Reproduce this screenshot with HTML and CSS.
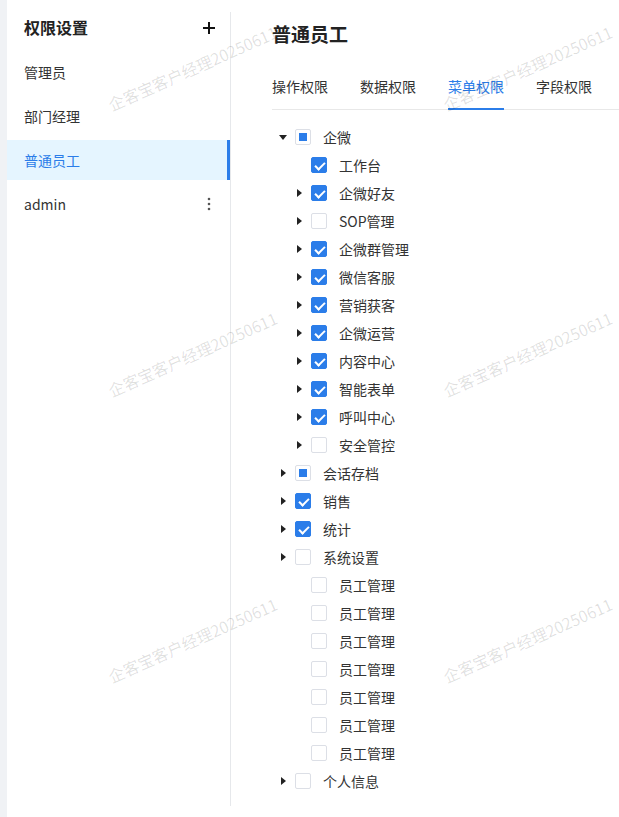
FILE: index.html
```html
<!doctype html>
<html>
<head>
<meta charset="utf-8">
<title>权限设置</title>
<link rel="stylesheet" href="styles.css">
</head>

<body>

<div class="page">
    <aside class="side">
        <div class="side-head">
            <span>权限设置</span>
            <svg class="add" width="14" height="14" viewBox="0 0 14 14"><path d="M7 1v12M1 7h12" stroke="#111" stroke-width="2"/></svg>
        </div>
        <ul class="role-list">
            <li>管理员</li>
            <li>部门经理</li>
            <li class="ac">普通员工</li>
            <li>admin
                <svg class="more" width="4" height="14" viewBox="0 0 4 14"><circle cx="2" cy="2" r="1.3" fill="#555"/><circle cx="2" cy="7" r="1.3" fill="#555"/><circle cx="2" cy="12" r="1.3" fill="#555"/></svg>
            </li>
        </ul>
    </aside>

    <main class="main">
        <h2 class="title">普通员工</h2>
        <div class="tabs">
            <a href="javascript:;">操作权限</a>
            <a href="javascript:;">数据权限</a>
            <a href="javascript:;" class="ac">菜单权限</a>
            <a href="javascript:;">字段权限</a>
        </div>

        <ul class="tree">
            <li><i class="caret down"></i><span class="cb half"></span>企微</li>
            <li class="sub"><i class="caret none"></i><span class="cb on"></span>工作台</li>
            <li class="sub"><i class="caret"></i><span class="cb on"></span>企微好友</li>
            <li class="sub"><i class="caret"></i><span class="cb"></span>SOP管理</li>
            <li class="sub"><i class="caret"></i><span class="cb on"></span>企微群管理</li>
            <li class="sub"><i class="caret"></i><span class="cb on"></span>微信客服</li>
            <li class="sub"><i class="caret"></i><span class="cb on"></span>营销获客</li>
            <li class="sub"><i class="caret"></i><span class="cb on"></span>企微运营</li>
            <li class="sub"><i class="caret"></i><span class="cb on"></span>内容中心</li>
            <li class="sub"><i class="caret"></i><span class="cb on"></span>智能表单</li>
            <li class="sub"><i class="caret"></i><span class="cb on"></span>呼叫中心</li>
            <li class="sub"><i class="caret"></i><span class="cb"></span>安全管控</li>
            <li><i class="caret"></i><span class="cb half"></span>会话存档</li>
            <li><i class="caret"></i><span class="cb on"></span>销售</li>
            <li><i class="caret"></i><span class="cb on"></span>统计</li>
            <li><i class="caret"></i><span class="cb"></span>系统设置</li>
            <li class="sub"><i class="caret none"></i><span class="cb"></span>员工管理</li>
            <li class="sub"><i class="caret none"></i><span class="cb"></span>员工管理</li>
            <li class="sub"><i class="caret none"></i><span class="cb"></span>员工管理</li>
            <li class="sub"><i class="caret none"></i><span class="cb"></span>员工管理</li>
            <li class="sub"><i class="caret none"></i><span class="cb"></span>员工管理</li>
            <li class="sub"><i class="caret none"></i><span class="cb"></span>员工管理</li>
            <li class="sub"><i class="caret none"></i><span class="cb"></span>员工管理</li>
            <li><i class="caret"></i><span class="cb"></span>个人信息</li>
        </ul>
    </main>

    <!-- 水印 -->
    <div class="watermark">
        <span>企客宝客户经理20250611</span>
        <span>企客宝客户经理20250611</span>
        <span>企客宝客户经理20250611</span>
        <span>企客宝客户经理20250611</span>
        <span>企客宝客户经理20250611</span>
        <span>企客宝客户经理20250611</span>
    </div>
</div>

</body>
</html>
```

FILE: styles.css
```css
*{ padding: 0; margin: 0; box-sizing: border-box; }
a{ text-decoration: none; }
li{ list-style: none; }
html, body{ height: 100%; overflow: hidden; }
body{ background: #f0f2f5; font-family: "Noto Sans CJK SC", "Noto Sans", sans-serif; color: #333; font-size: 14px; }

.page { position: relative; margin-left: 7px; height: 817px; background: #fff; display: flex; overflow: hidden; }

/* 左侧角色列表 */
.side { width: 224px; flex: none; margin: 12px 0 11px; border-right: 1px solid #e6e8eb; }
.side-head { height: 36px; display: flex; align-items: center; justify-content: space-between; padding: 0 14px 0 17px; font-size: 16px; font-weight: 600; color: #222; }
.side-head span { position: relative; top: -3px; }
.side-head .add { position: relative; top: -2px; }
.role-list { padding-top: 4px; display: flex; flex-direction: column; gap: 4px; }
.role-list li { height: 40px; display: flex; align-items: center; justify-content: space-between; padding: 0 19px 0 17px; color: #333; cursor: pointer; }
.role-list .ac { background: #e5f5ff; color: #2b7de9; border-right: 3px solid #2b7de9; padding-right: 16px; }

/* 右侧 */
.main { flex: 1; padding: 18px 0 0 41px; min-width: 0; }
.title { font-size: 19px; font-weight: 600; line-height: 32px; color: #222; }
.tabs { margin-top: 25px; display: flex; gap: 32px; border-bottom: 1px solid #e8e8e8; }
.tabs a { display: block; line-height: 22px; padding-bottom: 11px; color: #333; font-size: 14px; border-bottom: 2px solid transparent; margin-bottom: -1px; }
.tabs .ac { color: #2b7de9; border-bottom-color: #2b7de9; }

.tree { margin-top: 13px; }
.tree li { height: 28px; display: flex; align-items: center; color: #333; }
.tree .sub { padding-left: 16px; }

.caret { width: 23px; height: 28px; flex: none; position: relative; }
.caret::after { content: ''; position: absolute; left: 9px; top: 10px; border-style: solid; border-width: 4px 0 4px 5px; border-color: transparent transparent transparent #222; }
.caret.down::after { left: 7px; top: 12px; border-width: 5px 4px 0 4px; border-color: #222 transparent transparent transparent; }
.caret.none::after { display: none; }

.cb { width: 16px; height: 16px; flex: none; margin-right: 12px; border: 1px solid #dcdfe6; border-radius: 2px; background: #fff; position: relative; }
.cb.on { background: #2b7de9; border-color: #2b7de9; }
.cb.on::after { content: ''; position: absolute; left: 5px; top: 2px; width: 4px; height: 8px; border: solid #fff; border-width: 0 2px 2px 0; transform: rotate(45deg); }
.cb.half::after { content: ''; position: absolute; left: 3px; top: 3px; width: 8px; height: 8px; background: #2b7de9; }

.watermark { position: absolute; top: -75px; left: 18px; display: grid; grid-template-columns: repeat(2, 335px); grid-auto-rows: 286px; place-items: center; pointer-events: none; z-index: 5; }
.watermark span { display: block; white-space: nowrap; font-size: 16px; color: rgba(0,0,0,.13); transform: rotate(-24deg); }
```
